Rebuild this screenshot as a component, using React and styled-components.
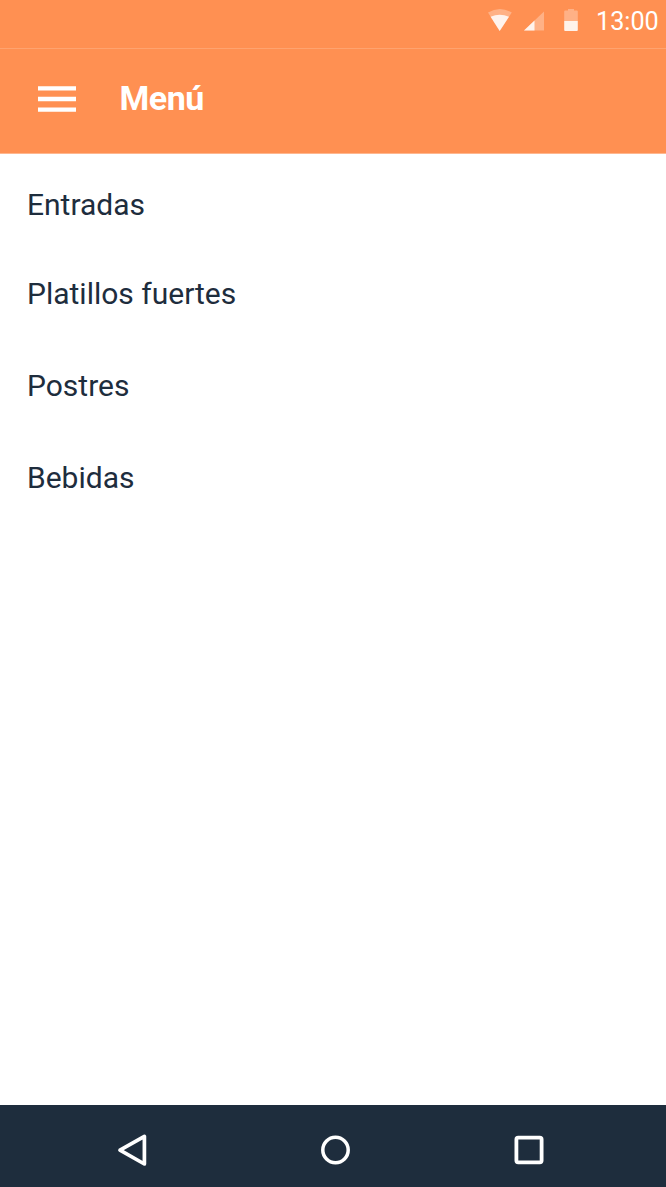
import React from "react";
import styled, { createGlobalStyle } from "styled-components";

const GlobalStyle = createGlobalStyle`
  * { box-sizing: border-box; }
  body { margin: 0; background: #fff; font-family: Roboto, "Liberation Sans", sans-serif; }
`;

const Screen = styled.div`
  display: flex;
  flex-direction: column;
  width: 666px;
  height: 1187px;
  background: #fff;
  overflow: hidden;
`;

const StatusBar = styled.header`
  display: flex;
  justify-content: flex-end;
  height: 49px;
  padding-right: 8px;
  background: #ff9052;
  border-bottom: 1px solid #ffa36f;
`;

const StatusIcons = styled.svg`
  display: block;
  width: 92px;
  height: 24px;
  margin: 8px 16px 0 0;
`;

const Clock = styled.time`
  width: 62px;
  color: #fff;
  font-size: 25.2px;
  line-height: 30px;
  padding-top: 7px;
  white-space: nowrap;
`;

const AppBar = styled.div`
  display: flex;
  align-items: flex-start;
  height: 105px;
  padding-left: 38px;
  background: #ff9052;
  border-bottom: 1px solid #ffb78f;
`;

const MenuButton = styled.button`
  display: block;
  width: 38px;
  height: 26px;
  margin: 37px 43.5px 0 0;
  padding: 0;
  border: 0;
  background: none;
  svg { display: block; }
`;

const Title = styled.h1`
  margin: 29px 0 0;
  color: #fff;
  font-size: 34px;
  line-height: 40px;
  font-weight: 700;
  letter-spacing: -0.45px;
`;

const List = styled.nav`
  flex: 1;
  display: flex;
  flex-direction: column;
  padding: 6px 0 0 27px;
`;

const Item = styled.a`
  height: ${(p) => p.$height}px;
  padding-top: 27px;
  color: #1e2d3d;
  font-size: 30px;
  line-height: 36px;
  white-space: nowrap;
`;

const NavBar = styled.footer`
  display: flex;
  align-items: flex-start;
  gap: 160px;
  height: 82px;
  padding: 28px 0 0 116px;
  background: #1e2d3d;
`;

const NavIcon = styled.svg`
  display: block;
  flex: none;
  width: ${(p) => p.$width}px;
  height: 34px;
  fill: none;
  stroke: #fff;
`;

const items = [
  { label: "Entradas", height: 89 },
  { label: "Platillos fuertes", height: 92 },
  { label: "Postres", height: 92 },
  { label: "Bebidas", height: 92 },
];

export default function App() {
  return (
    <Screen>
      <GlobalStyle />
      <StatusBar>
        <StatusIcons viewBox="0 0 92 24" fill="#fff">
          <path opacity=".3" d="M0 4.5Q11.7-2.5 23.8 4.5L11.7 23Z" />
          <path opacity=".85" d="M2.6 8.7Q11.7 5 21 8.7L11.7 23Z" />
          <path opacity=".3" d="M56 3.5V22.5H36Z" />
          <path opacity=".85" d="M46.5 12.5V22.5H36Z" />
          <path opacity=".3" d="M76.2 13V3.5Q76.2 2.5 77.2 2.5H80V1H86V2.5H88.8Q89.8 2.5 89.8 3.5V13Z" />
          <path opacity=".88" d="M76.2 13H89.8V22Q89.8 23 88.8 23H77.2Q76.2 23 76.2 22Z" />
        </StatusIcons>
        <Clock>13:00</Clock>
      </StatusBar>
      <AppBar>
        <MenuButton aria-label="Abrir menú">
          <svg width="38" height="26" viewBox="0 0 38 26" fill="#fff">
            <path d="M0 .2H38V4.6H0ZM0 10.8H38V15.2H0ZM0 21.4H38V25.8H0Z" />
          </svg>
        </MenuButton>
        <Title>Menú</Title>
      </AppBar>
      <List>
        {items.map((item) => (
          <Item key={item.label} $height={item.height}>{item.label}</Item>
        ))}
      </List>
      <NavBar>
        <NavIcon $width={36} viewBox="0 0 36 34">
          <path d="M4 17.2L28.4 3.4V31Z" strokeWidth="3.7" strokeLinejoin="round" />
        </NavIcon>
        <NavIcon $width={40} viewBox="0 0 40 34">
          <circle cx="23.5" cy="17" r="12.7" strokeWidth="3.5" />
        </NavIcon>
        <NavIcon $width={34} viewBox="0 0 34 34">
          <rect x="4.4" y="4.7" width="25.2" height="24.6" rx="1.8" strokeWidth="3.8" />
        </NavIcon>
      </NavBar>
    </Screen>
  );
}
